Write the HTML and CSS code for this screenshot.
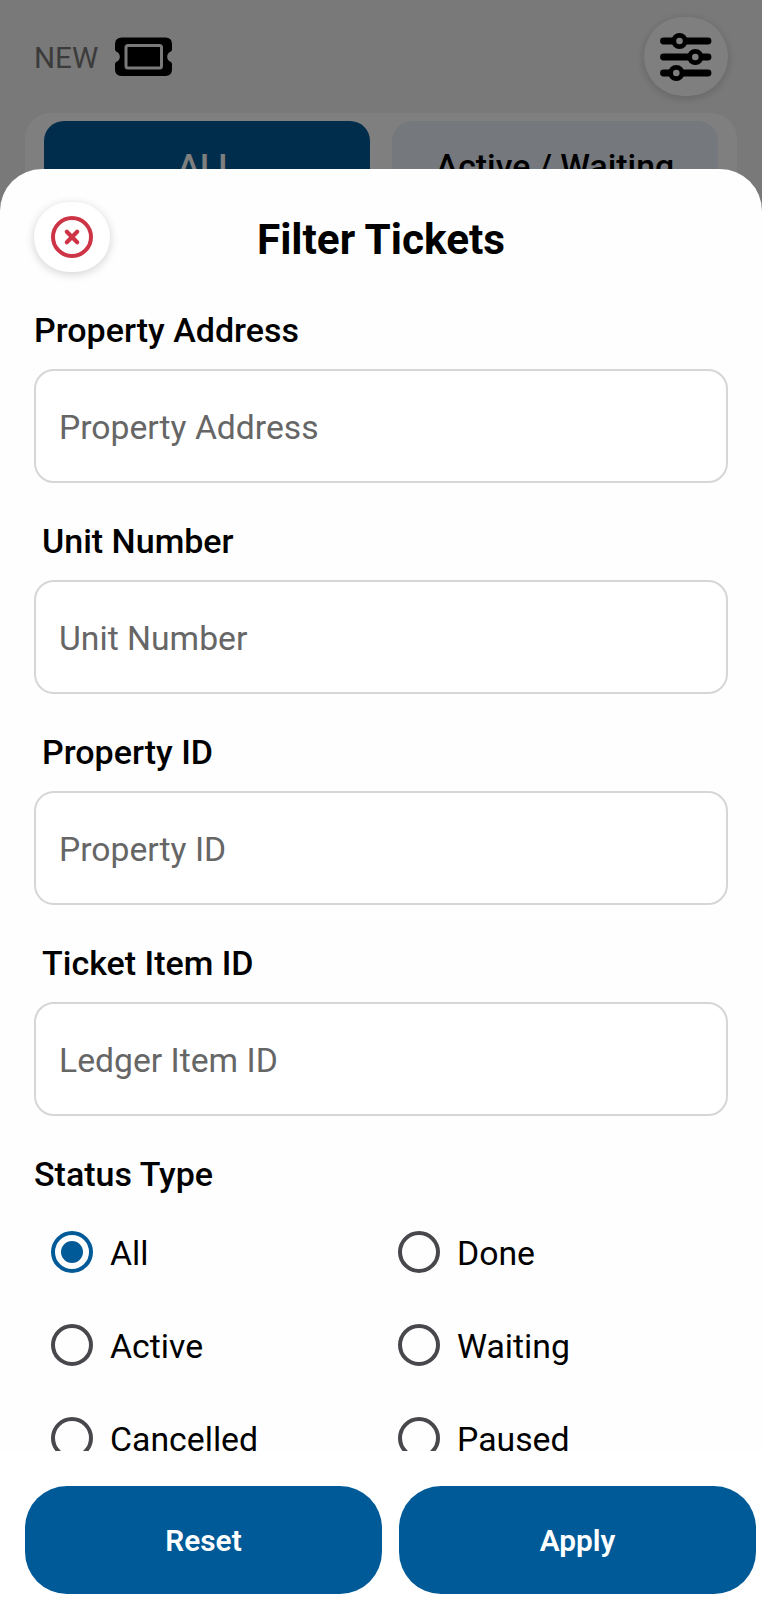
FILE: index.html
```html
<!DOCTYPE html>
<html lang="en">
<head>
<meta charset="utf-8">
<title>Filter Tickets</title>
<link rel="stylesheet" href="styles.css">
</head>
<body>
<div class="screen">
  <header class="topbar">
    <span class="topbar-label">NEW</span>
    <svg class="ticket" width="58" height="40" viewBox="0 0 58 40">
      <path d="M7 .5H50.500Q57 .5 57 7V12.500Q57 14 55.500 14.700A5.500 5.500 0 0 0 55.500 24.800Q57 25.500 57 27V32.500Q57 39 50.500 39H6.500Q0 39 0 32.500V27Q0 25.500 1.500 24.800A5.500 5.500 0 0 0 1.500 14.700Q0 14 0 12.500V7Q0 .5 7 .5Z"/>
      <rect class="ticket-line" x="11" y="8.500" width="35.500" height="22.500" rx="2"/>
    </svg>
    <button class="round options">
      <svg width="52" height="50" viewBox="0 0 52 50">
        <path d="M3.500 9H48M3.500 25H48M3.500 41H48"/>
        <circle cx="19.500" cy="9" r="5.700"/>
        <circle cx="35.300" cy="25" r="5.700"/>
        <circle cx="16.300" cy="41" r="5.700"/>
      </svg>
    </button>
  </header>
  <nav class="tabs">
    <div class="tab tab-active">ALL</div>
    <div class="tab">Active / Waiting</div>
  </nav>
</div>
<div class="backdrop"></div>
<section class="sheet">
  <header class="sheet-head">
    <button class="round close">
      <svg width="42" height="42" viewBox="0 0 42 42">
        <circle cx="21" cy="21" r="19"/>
        <path d="M15.800 15.800L26.200 26.200M26.200 15.800L15.800 26.200"/>
      </svg>
    </button>
    <h1>Filter Tickets</h1>
  </header>
  <div class="form">
    <div class="field"><label class="label flush">Property Address</label><input class="input" placeholder="Property Address"></div>
    <div class="field"><label class="label">Unit Number</label><input class="input" placeholder="Unit Number"></div>
    <div class="field"><label class="label">Property ID</label><input class="input" placeholder="Property ID"></div>
    <div class="field"><label class="label">Ticket Item ID</label><input class="input" placeholder="Ledger Item ID"></div>
    <div class="label flush">Status Type</div>
    <div class="radios">
      <label class="option"><span class="radio checked"></span><span class="option-text">All</span></label>
      <label class="option"><span class="radio"></span><span class="option-text">Done</span></label>
      <label class="option"><span class="radio"></span><span class="option-text">Active</span></label>
      <label class="option"><span class="radio"></span><span class="option-text">Waiting</span></label>
      <label class="option"><span class="radio"></span><span class="option-text">Cancelled</span></label>
      <label class="option"><span class="radio"></span><span class="option-text">Paused</span></label>
    </div>
  </div>
  <footer class="actions">
    <button class="action">Reset</button>
    <button class="action">Apply</button>
  </footer>
</section>
</body>
</html>
```
FILE: styles.css
```css
* { box-sizing: border-box; }
body {
  margin: 0;
  height: 1600px;
  position: relative;
  overflow: hidden;
  font-family: Roboto, "Liberation Sans", sans-serif;
  color: #000;
}
button { border: 0; padding: 0; font-family: inherit; }
.screen { height: 1600px; background: #f3f3f3; }
.topbar {
  display: flex;
  align-items: center;
  height: 113px;
  padding: 0 34px;
}
.topbar-label { font-size: 29.6px; font-weight: 400; color: #777; width: 81px; padding-top: 3px; }
.round {
  display: flex;
  align-items: center;
  justify-content: center;
  background: #fff;
  border-radius: 42px;
  box-shadow: 0 2px 10px rgba(0, 0, 0, .18);
}
.ticket-line { fill: none; stroke: #f3f3f3; stroke-width: 3; }
.options { width: 84px; height: 79px; margin-left: auto; }
.options svg { fill: #fff; stroke: #000; stroke-width: 4.4; }
.options path { stroke-width: 6.8; stroke-linecap: round; }
.options circle { stroke-width: 4.8; }
.tabs {
  display: flex;
  gap: 22px;
  height: 120px;
  margin: 0 25px;
  padding: 8px 19px;
  border-radius: 26px;
  background: #fff;
}
.tab {
  flex: 1;
  border-radius: 20px;
  background: #eaf0fb;
  font-size: 33.8px;
  font-weight: 500;
  line-height: 91px;
  text-align: center;
}
.tab-active { background: #005a98; color: #fff; }
.backdrop { position: absolute; inset: 0; background: rgba(0, 0, 0, .5); }
.sheet {
  position: absolute;
  inset: 169px 0 0;
  display: flex;
  flex-direction: column;
  background: #fefefe;
  border-radius: 42px 42px 0 0;
}
.sheet-head {
  display: grid;
  grid-template-columns: 76px 1fr 76px;
  align-items: center;
  padding: 33px 34px 0;
  height: 103px;
}
.close { width: 76px; height: 70px; }
.close svg { fill: none; stroke: #cd3547; stroke-width: 4; stroke-linecap: round; }
.close path { stroke-width: 4.2; }
h1 { margin: 6px 0 0; font-size: 42.3px; line-height: 50px; font-weight: 700; text-align: center; }
.form { height: 1179px; padding: 38px 34px 0; overflow: hidden; }
.field { height: 211px; }
.label {
  display: block;
  height: 59px;
  padding-left: 8px;
  font-size: 34px;
  line-height: 40px;
  font-weight: 500;
}
.flush { padding-left: 0; }
.input {
  display: block;
  width: 100%;
  height: 114px;
  padding: 2px 23px 0;
  border: 2px solid #d6d6d6;
  border-radius: 20px;
  background: #fff;
  font: 400 33.7px Roboto, "Liberation Sans", sans-serif;
}
.input::placeholder { color: #666; opacity: 1; }
.radios { display: grid; grid-template-columns: 1fr 1fr; grid-auto-rows: 93px; margin-top: -8px; }
.option { display: flex; align-items: center; padding-left: 17px; gap: 17px; font-size: 33.8px; }
.option-text { padding-top: 4px; line-height: 40px; }
.radio {
  display: flex;
  align-items: center;
  justify-content: center;
  width: 42px;
  height: 42px;
  border: 4px solid #48474c;
  border-radius: 50%;
}
.checked { border-color: #005a98; }
.checked::before { content: ""; width: 22px; height: 22px; border-radius: 50%; background: #005a98; }
.actions { display: flex; gap: 17px; padding: 35px 6px 6px 25px; flex: 1; background: #fff; }
.action {
  flex: 1;
  height: 108px;
  border-radius: 42px;
  background: #005a98;
  color: #fff;
  font-size: 29.8px;
  font-weight: 600;
  padding-top: 1px;
}
```
